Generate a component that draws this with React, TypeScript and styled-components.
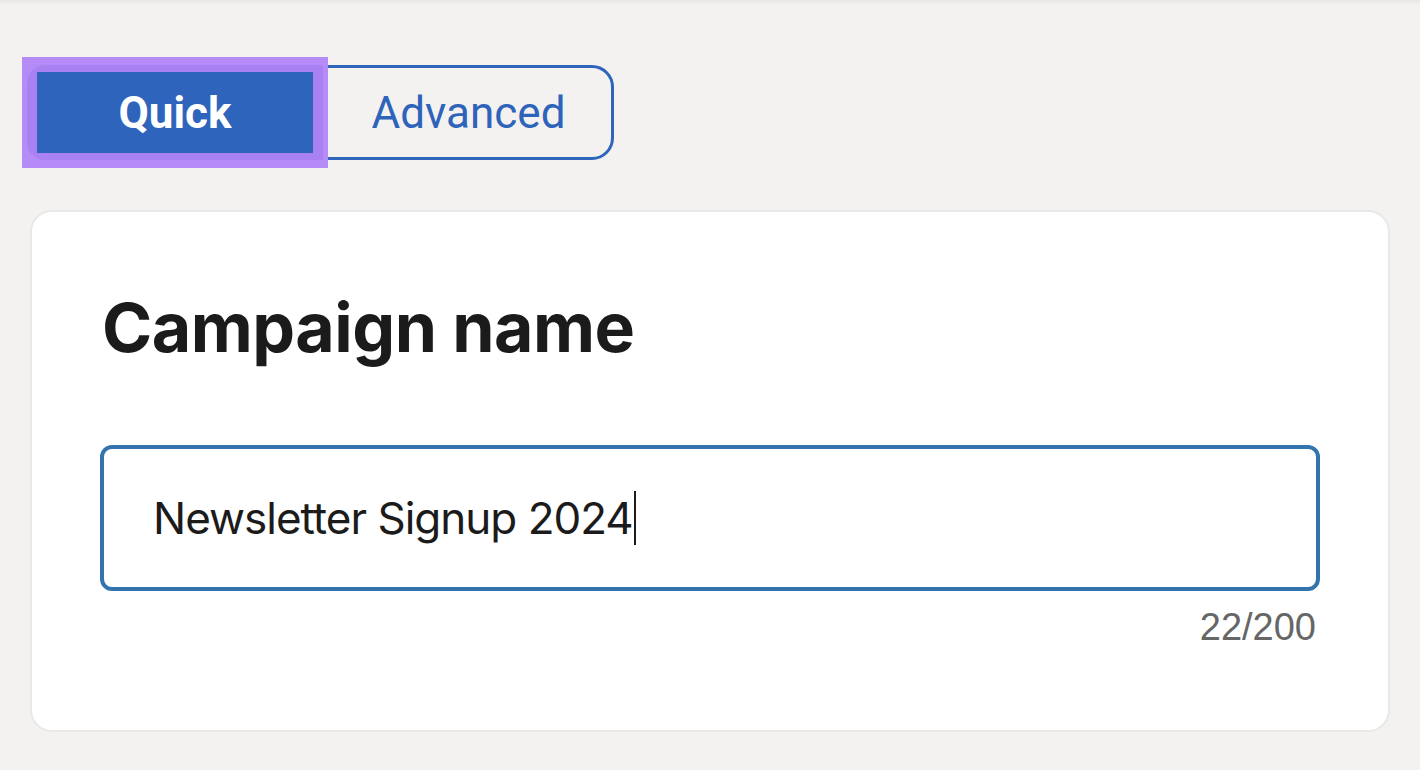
import styled, { createGlobalStyle } from "styled-components";

const GlobalStyle = createGlobalStyle`
	html, body {
		margin: 0;
		padding: 0;
	}
	body {
		background: linear-gradient(#e7e6e4, #f3f2f0 5px) no-repeat, #f3f2f0;
		font-family: "Inter", "Liberation Sans", sans-serif;
		color: #1b1b1b;
	}
`;

export default function App() {
	const name = "Newsletter Signup 2024";
	const max = 200;

	return (
		<>
			<GlobalStyle />
			<Page>
				<ModeGroup role="tablist">
					<FocusRing>
						<QuickTab role="tab" aria-selected="true">
							<QuickFill>Quick</QuickFill>
						</QuickTab>
					</FocusRing>
					<AdvancedTab role="tab" aria-selected="false">
						Advanced
					</AdvancedTab>
				</ModeGroup>
				<Card>
					<Title>Campaign name</Title>
					<Field>
						<FieldText>{name}</FieldText>
						<Caret />
					</Field>
					<Counter>
						{name.length}/{max}
					</Counter>
				</Card>
			</Page>
		</>
	);
}

const Page = styled.div`
	padding: 65px 30px 30px 30px;
`;

const ModeGroup = styled.div`
	display: flex;
	margin-left: -3px;
`;

const FocusRing = styled.div`
	display: flex;
	position: relative;
	z-index: 1;
	margin: -8px -5px;
	padding: 8px 5px;
	background: #b58bf7;
`;

const QuickTab = styled.button`
	display: flex;
	box-sizing: border-box;
	width: 296px;
	height: 95px;
	padding: 7px 10px;
	border: none;
	border-radius: 18px 0 0 18px;
	background: #aa81f3;
	cursor: pointer;
`;

const QuickFill = styled.span`
	display: flex;
	align-items: center;
	justify-content: center;
	flex: 1;
	background: #2e64bb;
	color: #ffffff;
	font-family: "Roboto", "Liberation Sans", sans-serif;
	font-size: 44px;
	font-weight: 700;
`;

const AdvancedTab = styled.button`
	box-sizing: border-box;
	width: 291px;
	height: 95px;
	border: 3px solid #2f65bd;
	border-radius: 0 22px 22px 0;
	background: transparent;
	color: #2e63ba;
	font-family: "Roboto", "Liberation Sans", sans-serif;
	font-size: 44px;
	font-weight: 400;
	cursor: pointer;
`;

const Card = styled.div`
	margin-top: 50px;
	box-sizing: border-box;
	height: 522px;
	padding: 74px 68px 0 68px;
	background: #ffffff;
	border: 2px solid #e9e8e6;
	border-radius: 22px;
`;

const Title = styled.h2`
	margin: 0 0 77px 2px;
	font-family: "Inter", "Liberation Sans", sans-serif;
	font-size: 68px;
	line-height: 82px;
	font-weight: 700;
	letter-spacing: -0.5px;
	color: #1b1b1b;
`;

const Field = styled.div`
	display: flex;
	align-items: center;
	box-sizing: border-box;
	height: 146px;
	padding: 0 49px;
	border: 4px solid #3373ae;
	border-radius: 12px;
	background: #ffffff;
`;

const FieldText = styled.span`
	font-family: "Inter", "Liberation Sans", sans-serif;
	font-size: 44px;
	letter-spacing: -1px;
	color: #1b1b1b;
`;

const Caret = styled.span`
	width: 2px;
	height: 54px;
	margin-left: 1px;
	background: #1b1b1b;
`;

const Counter = styled.div`
	margin-top: 14px;
	padding-right: 4px;
	text-align: right;
	font-family: "Liberation Sans", "Roboto", sans-serif;
	font-size: 38px;
	line-height: 44px;
	color: #666666;
`;
